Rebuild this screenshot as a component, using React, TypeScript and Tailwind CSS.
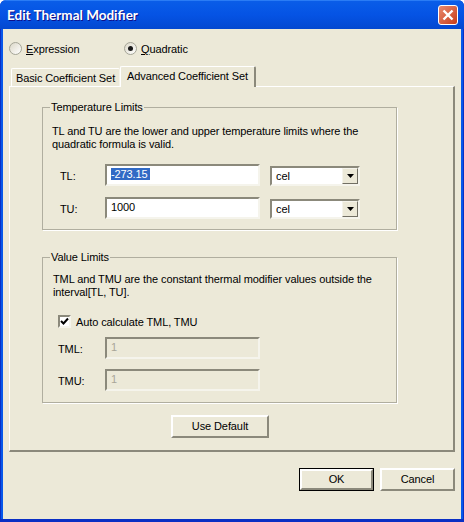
function Radio({ checked }: { checked?: boolean }) {
  return (
    <span className="w-[13px] h-[13px] rounded-full border border-[#a5a597] bg-gradient-to-br from-[#dcd8c8] to-white flex items-center justify-center">
      {checked && <span className="w-[5px] h-[5px] rounded-full bg-[#1a1a1a]" />}
    </span>
  );
}

function TextBox({ value, selected, disabled }: { value: string; selected?: boolean; disabled?: boolean }) {
  return (
    <div className="w-[155px] h-[22px] border-2 border-t-[#8b897b] border-l-[#8b897b] border-r-[#f5f4ec] border-b-[#f5f4ec]">
      <div className={`h-full pl-[4px] pt-[2px] leading-[12px] ${disabled ? "bg-[#ece9d8] text-[#a8a698]" : "bg-white text-black"}`}>
        <span className={selected ? "bg-[#316ac5] text-white inline-block pr-[2px]" : ""}>{value}</span>
      </div>
    </div>
  );
}

function ComboBox() {
  return (
    <div className="w-[90px] h-[20px] border-2 border-t-[#8b897b] border-l-[#8b897b] border-r-[#f5f4ec] border-b-[#f5f4ec] bg-white flex justify-between">
      <span className="pl-[4px] leading-[16px] text-black">cel</span>
      <span className="w-4 h-4 bg-[#ece9d8] border border-t-[#f5f4ec] border-l-[#f5f4ec] border-r-[#716f64] border-b-[#716f64] flex items-center justify-center">
        <svg width="7" height="4" viewBox="0 0 7 4"><path d="M0 0h7L3.5 4z" fill="#000" /></svg>
      </span>
    </div>
  );
}

function Button({ label, width, isDefault }: { label: string; width: string; isDefault?: boolean }) {
  return (
    <div className={`${width} h-[23px] bg-[#ece9d8] ${isDefault ? "border border-black" : ""}`}>
      <div className="w-full h-full border-2 border-t-white border-l-white border-r-[#8b897b] border-b-[#8b897b] flex items-center justify-center text-black">
        {label}
      </div>
    </div>
  );
}

function GroupBox({ title, className, children }: { title: string; className: string; children: React.ReactNode }) {
  return (
    <div className={`relative w-[355px] border border-[#b0ae9f] shadow-[1px_1px_0_#ffffff] ${className}`}>
      <span className="absolute left-[7px] -top-[7px] px-[1px] bg-[#ece9d8] leading-[13px] text-black">{title}</span>
      {children}
    </div>
  );
}

export default function App() {
  return (
    <div className="w-[464px] h-[522px] flex flex-col text-[11px] tracking-[-0.1px] whitespace-nowrap overflow-hidden rounded-t-[6px] bg-[#0a2fc4]" style={{ fontFamily: '"Liberation Sans", sans-serif' }}>
      {/* title bar */}
      <div className="h-[29px] shrink-0 flex items-center justify-between pl-[7px] pr-[6px] border-t border-[#2a7cf5] bg-gradient-to-b from-[#0a5de8] via-[#0553e4] to-[#0348d0]">
        <span className="text-white font-bold text-[13.5px] tracking-normal [text-shadow:1px_1px_0_#0f1089]" style={{ fontFamily: 'Lato, sans-serif' }}>
          Edit Thermal Modifier
        </span>
        <div className="w-[20px] h-[20px] rounded-[3px] border border-white bg-gradient-to-br from-[#e8896d] to-[#c73a14] flex items-center justify-center">
          <svg width="12" height="12" viewBox="0 0 12 12"><path d="M1.5 1.5l9 9M10.5 1.5l-9 9" stroke="#fff" strokeWidth="2.4" /></svg>
        </div>
      </div>

      {/* client area */}
      <div className="flex-1 mx-[3px] mb-[3px] bg-[#ece9d8] shadow-[-2px_0_0_#0757ea,2px_0_0_#0757ea] flex flex-col pl-[6px] pr-[6px]">
        <div className="flex items-center h-[13px] mt-[13px] text-black">
          <div className="flex items-center gap-[4px] w-[115px]">
            <Radio />
            <span className="mt-[2px]"><span className="underline">E</span>xpression</span>
          </div>
          <div className="flex items-center gap-[4px]">
            <Radio checked />
            <span className="mt-[2px]"><span className="underline">Q</span>uadratic</span>
          </div>
        </div>

        {/* tabs */}
        <div className="flex items-end h-[20px] mt-[11px] pl-[2px] relative z-10 text-black leading-[13px]">
          <div className="w-[109px] h-[18px] rounded-t-[2px] border border-b-0 border-white border-r-[#f5f4ec] pt-[3px] text-center">Basic Coefficient Set</div>
          <div className="w-[136px] h-[21px] -mb-px rounded-t-[2px] border-t border-l border-white border-r-2 border-r-[#8b897b] bg-[#ece9d8] pt-[3px] text-center">Advanced Coefficient Set</div>
        </div>

        {/* tab page */}
        <div className="h-[366px] border border-white border-r-2 border-b-2 border-r-[#8b897b] border-b-[#8b897b] flex flex-col pl-[32px]">
          <GroupBox title="Temperature Limits" className="mt-[20px] h-[123px] pl-[9px] pr-2 pt-[17px]">
            <p className="leading-[13px] text-black">
              TL and TU are the lower and upper temperature limits where the
              <br />
              quadratic formula is valid.
            </p>
            <div className="flex items-center mt-[13px] ml-[8px] h-[22px]">
              <span className="w-[45px] pt-[3px] text-black">TL:</span>
              <TextBox value="-273.15" selected />
              <div className="ml-[10px] mt-[2px]"><ComboBox /></div>
            </div>
            <div className="flex items-center mt-[11px] ml-[8px] h-[22px]">
              <span className="w-[45px] pt-[3px] text-black">TU:</span>
              <TextBox value="1000" />
              <div className="ml-[10px] mt-[2px]"><ComboBox /></div>
            </div>
          </GroupBox>

          <GroupBox title="Value Limits" className="mt-[27px] h-[146px] pl-[10px] pr-2 pt-[15px]">
            <p className="leading-[13px] text-black">
              TML and TMU are the constant thermal modifier values outside the
              <br />
              interval[TL, TU].
            </p>
            <div className="flex items-center gap-[5px] h-[13px] mt-[16px] ml-[5px] text-black">
              <span className="w-[13px] h-[13px] border-2 border-t-[#8b897b] border-l-[#8b897b] border-r-[#f5f4ec] border-b-[#f5f4ec] bg-white flex items-center justify-center">
                <svg width="9" height="9" viewBox="0 0 9 9"><path d="M1 4l2.5 2.5L8 1.5" stroke="#000" strokeWidth="2" fill="none" /></svg>
              </span>
              <span className="pt-px">Auto calculate TML, TMU</span>
            </div>
            <div className="flex items-center mt-[9px] ml-[5px] h-[22px]">
              <span className="w-[47px] pt-[2px] text-black">TML:</span>
              <TextBox value="1" disabled />
            </div>
            <div className="flex items-center mt-[10px] ml-[5px] h-[22px]">
              <span className="w-[47px] pt-[2px] text-black">TMU:</span>
              <TextBox value="1" disabled />
            </div>
          </GroupBox>

          <div className="mt-[12px] ml-[129px]">
            <Button label="Use Default" width="w-[98px]" />
          </div>
        </div>

        <div className="flex justify-end gap-[6px] mt-[16px]">
          <Button label="OK" width="w-[75px]" isDefault />
          <Button label="Cancel" width="w-[75px]" />
        </div>
      </div>
    </div>
  );
}
